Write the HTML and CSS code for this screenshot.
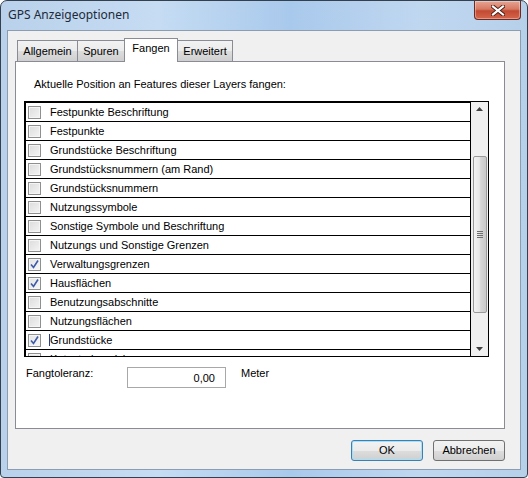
FILE: index.html
```html
<!DOCTYPE html>
<html>
<head>
<meta charset="utf-8">
<link rel="stylesheet" href="styles.css">
</head>
<body>
<div class="window">
  <div class="titlebar">
    <div class="title">GPS Anzeigeoptionen</div>
    <div class="close">
      <svg width="14" height="11" viewBox="0 0 14 11"><path d="M2 1.5 L12 9.5 M12 1.5 L2 9.5" stroke="#4a1d14" stroke-width="4" stroke-linecap="square"/><path d="M2 1.5 L12 9.5 M12 1.5 L2 9.5" stroke="#ffffff" stroke-width="2.2" stroke-linecap="square"/></svg>
    </div>
  </div>
  <div class="client">
    <div class="tabs">
      <div class="tab t1">Allgemein</div>
      <div class="tab t2">Spuren</div>
      <div class="tab t3 active">Fangen</div>
      <div class="tab t4">Erweitert</div>
    </div>
    <div class="panel">
      <div class="label">Aktuelle Position an Features dieser Layers fangen:</div>
      <div class="list">
        <div class="rows">
          <div class="row"><span class="cb"></span><span class="txt">Festpunkte Beschriftung</span></div>
          <div class="row"><span class="cb"></span><span class="txt">Festpunkte</span></div>
          <div class="row"><span class="cb"></span><span class="txt">Grundstücke Beschriftung</span></div>
          <div class="row"><span class="cb"></span><span class="txt">Grundstücksnummern (am Rand)</span></div>
          <div class="row"><span class="cb"></span><span class="txt">Grundstücksnummern</span></div>
          <div class="row"><span class="cb"></span><span class="txt">Nutzungssymbole</span></div>
          <div class="row"><span class="cb"></span><span class="txt">Sonstige Symbole und Beschriftung</span></div>
          <div class="row"><span class="cb"></span><span class="txt">Nutzungs und Sonstige Grenzen</span></div>
          <div class="row"><span class="cb checked"><svg width="9" height="9" viewBox="0 0 9 9"><path d="M1 4.5 L3.5 7.5 L8 0.5" fill="none" stroke="#3c5aa8" stroke-width="1.6"/></svg></span><span class="txt">Verwaltungsgrenzen</span></div>
          <div class="row"><span class="cb checked"><svg width="9" height="9" viewBox="0 0 9 9"><path d="M1 4.5 L3.5 7.5 L8 0.5" fill="none" stroke="#3c5aa8" stroke-width="1.6"/></svg></span><span class="txt">Hausflächen</span></div>
          <div class="row"><span class="cb"></span><span class="txt">Benutzungsabschnitte</span></div>
          <div class="row"><span class="cb"></span><span class="txt">Nutzungsflächen</span></div>
          <div class="row"><span class="cb checked"><svg width="9" height="9" viewBox="0 0 9 9"><path d="M1 4.5 L3.5 7.5 L8 0.5" fill="none" stroke="#3c5aa8" stroke-width="1.6"/></svg></span><span class="txt focus">Grundstücke</span></div>
          <div class="row"><span class="cb"></span><span class="txt">Katasterbezeichnung</span></div>
        </div>
        <div class="scrollbar">
          <div class="arrow"><svg width="7" height="4" viewBox="0 0 7 4"><path d="M0 4 L3.5 0 L7 4 Z" fill="#404040"/></svg></div>
          <div class="track">
            <div class="thumb"><span class="grip"></span><span class="grip"></span><span class="grip"></span><span class="grip"></span></div>
          </div>
          <div class="arrow"><svg width="7" height="4" viewBox="0 0 7 4"><path d="M0 0 L7 0 L3.5 4 Z" fill="#404040"/></svg></div>
        </div>
      </div>
      <div class="tol">
        <span class="tol-label">Fangtoleranz:</span>
        <span class="input">0,00</span>
        <span class="unit">Meter</span>
      </div>
    </div>
    <div class="buttons">
      <div class="btn default">OK</div>
      <div class="btn">Abbrechen</div>
    </div>
  </div>
</div>
</body>
</html>
```

FILE: styles.css
```css
html, body {
  margin: 0;
  padding: 0;
  width: 528px;
  height: 478px;
  overflow: hidden;
  background: #ffffff;
}

.window {
  box-sizing: border-box;
  width: 528px;
  height: 478px;
  border: 1px solid #34404e;
  border-radius: 7px 7px 4px 4px;
  background: linear-gradient(90deg, #b9d1ea 0%, #c5dcf3 30%, #a9c9ec 55%, #c0d7f0 80%, #b7d0ea 100%);
  display: flex;
  flex-direction: column;
  font-family: "Liberation Sans", Arial, sans-serif;
  font-size: 11px;
  color: #000;
}

.titlebar {
  height: 29px;
  display: flex;
  justify-content: space-between;
  align-items: flex-start;
  padding-left: 7px;
}

.title {
  font-family: "Noto Sans", "DejaVu Sans", sans-serif;
  font-size: 12px;
  line-height: 28px;
  color: #1e2a3a;
}

.close {
  width: 45px;
  height: 18px;
  margin-right: 6px;
  border: 1px solid #6b2b22;
  border-top: none;
  border-radius: 0 0 4px 4px;
  background: linear-gradient(180deg, #e8a493 0%, #d67a63 45%, #c24a32 55%, #d5654b 100%);
  display: flex;
  align-items: center;
  justify-content: center;
  box-shadow: inset 0 0 0 1px rgba(255,255,255,0.35);
}

.client {
  flex: 1;
  margin: 0 6px 7px 6px;
  border: 1px solid #8c9db2;
  background: #f0f0f0;
  display: flex;
  flex-direction: column;
}

.tabs {
  display: flex;
  align-items: flex-end;
  padding-left: 9px;
  padding-top: 7px;
  height: 23px;
  position: relative;
  z-index: 2;
}

.tab {
  box-sizing: border-box;
  height: 21px;
  border: 1px solid #898c95;
  border-bottom: none;
  background: linear-gradient(180deg, #f2f2f2 0%, #ebebeb 50%, #dddddd 51%, #cfcfcf 100%);
  text-align: center;
  line-height: 20px;
  margin-left: -1px;
  font-size: 11px;
}

.t1 { width: 61px; margin-left: 0; }
.t2 { width: 48px; }
.t3 { width: 54px; }
.t4 { width: 56px; }

.tab.active {
  height: 24px;
  background: #ffffff;
  margin-bottom: -1px;
  line-height: 19px;
  position: relative;
  z-index: 3;
}

.panel {
  box-sizing: border-box;
  margin-left: 7px;
  width: 490px;
  height: 368px;
  border: 1px solid #898c95;
  background: #ffffff;
  padding: 15px 0 0 8px;
  position: relative;
  z-index: 1;
}

.label {
  padding-left: 10px;
  line-height: 14px;
  height: 24px;
}

.list {
  box-sizing: border-box;
  width: 465px;
  height: 256px;
  border: 1px solid #000;
  border-left-width: 2px;
  display: flex;
  overflow: hidden;
}

.rows {
  flex: 1;
  overflow: hidden;
}

.row {
  height: 18px;
  border-top: 1px solid #000;
  display: flex;
  align-items: center;
}

.cb {
  box-sizing: border-box;
  width: 13px;
  height: 13px;
  margin-left: 2px;
  margin-right: 9px;
  border: 1px solid #8e8f8f;
  background: linear-gradient(135deg, #dcdcdc 0%, #f4f4f4 100%);
  box-shadow: inset 0 0 0 1px #f5f5f5;
  display: flex;
  align-items: center;
  justify-content: center;
}

.cb.checked {
  background: linear-gradient(135deg, #e4e4e4 0%, #f6f6f6 100%);
}

.txt.focus {
  border-left: 1px solid #2a3f8c;
  margin-left: -1px;
}

.scrollbar {
  width: 17px;
  border-left: 1px solid #000;
  background: #f0f0f0;
  display: flex;
  flex-direction: column;
}

.arrow {
  height: 17px;
  display: flex;
  align-items: center;
  justify-content: center;
}

.track {
  flex: 1;
  padding-top: 40px;
  padding-bottom: 30px;
}

.thumb {
  box-sizing: border-box;
  margin: 0 1px 0 2px;
  height: 157px;
  border: 1px solid #9a9a9a;
  border-radius: 2px;
  background: linear-gradient(90deg, #f3f3f3 0%, #e8e8e8 45%, #d6d6d6 55%, #c9c9c9 100%);
  display: flex;
  flex-direction: column;
  align-items: center;
  justify-content: center;
  gap: 1px;
}

.grip {
  width: 6px;
  height: 1px;
  background: #6f6f6f;
}

.tol {
  display: flex;
  align-items: flex-start;
  margin-top: 9px;
}

.tol-label {
  margin-left: 2px;
  width: 101px;
  line-height: 14px;
}

.input {
  box-sizing: border-box;
  width: 99px;
  height: 21px;
  margin-top: 1px;
  border: 1px solid #a8a8a8;
  background: #fff;
  text-align: right;
  padding-right: 10px;
  line-height: 20px;
}

.unit {
  margin-left: 15px;
  line-height: 14px;
}

.buttons {
  display: flex;
  justify-content: flex-end;
  gap: 10px;
  padding-top: 11px;
  padding-right: 15px;
}

.btn {
  box-sizing: border-box;
  width: 72px;
  height: 21px;
  border: 1px solid #707070;
  border-radius: 3px;
  background: linear-gradient(180deg, #f2f2f2 0%, #ebebeb 50%, #dddddd 51%, #cfcfcf 100%);
  text-align: center;
  line-height: 19px;
}

.btn.default {
  border-color: #3c7fb1;
  box-shadow: inset 0 0 0 1px #a6e0f8;
}
```
